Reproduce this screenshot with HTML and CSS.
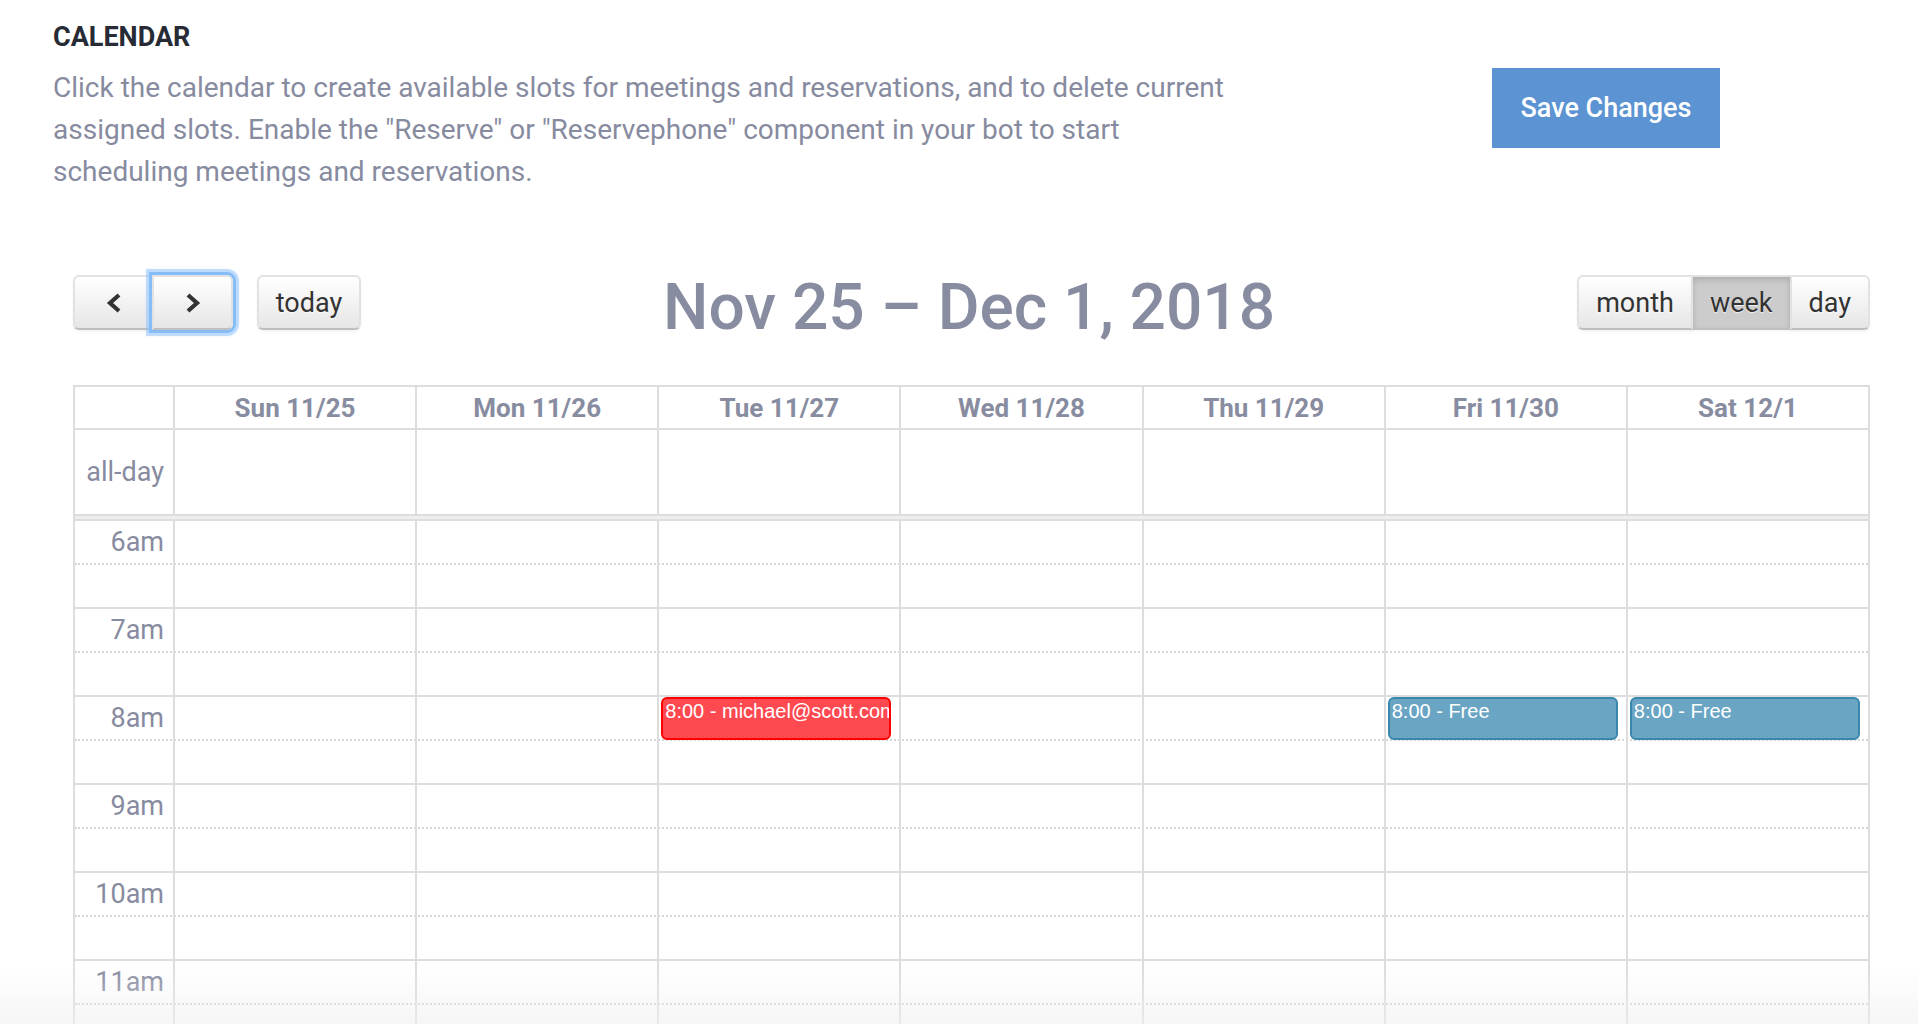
FILE: index.html
```html
<!DOCTYPE html>
<html lang="en">
<head>
    <meta charset="UTF-8">
    <meta name="viewport" content="width=device-width, initial-scale=1.0">
    <title>Calendar</title>
    <link rel="stylesheet" href="styles.css">
</head>
<body>

<div class="page">
    <div class="header">
        <div class="intro">
            <h2 class="section-title">CALENDAR</h2>
            <p class="section-desc">Click the calendar to create available slots for meetings and reservations, and to delete current assigned slots. Enable the "Reserve" or "Reservephone" component in your bot to start scheduling meetings and reservations.</p>
        </div>
        <button class="btn-save">Save Changes</button>
    </div>

    <div class="calendar">
        <!-- Toolbar -->
        <div class="cal-toolbar">
            <div class="toolbar-left">
                <div class="btn-group">
                    <button class="cal-btn btn-icon" aria-label="prev">
                        <svg width="18" height="22" viewBox="0 0 18 22"><polyline points="14,3 5,11 14,19" fill="none" stroke="#333" stroke-width="4.2"/></svg>
                    </button>
                    <button class="cal-btn btn-icon is-focused" aria-label="next">
                        <svg width="18" height="22" viewBox="0 0 18 22"><polyline points="4,3 13,11 4,19" fill="none" stroke="#333" stroke-width="4.2"/></svg>
                    </button>
                </div>
                <button class="cal-btn btn-today">today</button>
            </div>
            <h2 class="cal-title">Nov 25 – Dec 1, 2018</h2>
            <div class="btn-group">
                <button class="cal-btn">month</button>
                <button class="cal-btn is-active">week</button>
                <button class="cal-btn">day</button>
            </div>
        </div>

        <!-- Week grid -->
        <div class="cal-grid">
            <div class="cal-row cal-head">
                <div class="cal-axis"></div>
                <div class="cal-cell">Sun 11/25</div>
                <div class="cal-cell">Mon 11/26</div>
                <div class="cal-cell">Tue 11/27</div>
                <div class="cal-cell">Wed 11/28</div>
                <div class="cal-cell">Thu 11/29</div>
                <div class="cal-cell">Fri 11/30</div>
                <div class="cal-cell">Sat 12/1</div>
            </div>
            <div class="cal-row cal-allday">
                <div class="cal-axis">all-day</div>
                <div class="cal-cell"></div>
                <div class="cal-cell"></div>
                <div class="cal-cell"></div>
                <div class="cal-cell"></div>
                <div class="cal-cell"></div>
                <div class="cal-cell"></div>
                <div class="cal-cell"></div>
            </div>
            <div class="cal-divider"></div>

            <div class="cal-body">
                <div class="slat"><div class="slat-axis">6am</div></div>
                <div class="slat half"></div>
                <div class="slat"><div class="slat-axis">7am</div></div>
                <div class="slat half"></div>
                <div class="slat"><div class="slat-axis">8am</div></div>
                <div class="slat half"></div>
                <div class="slat"><div class="slat-axis">9am</div></div>
                <div class="slat half"></div>
                <div class="slat"><div class="slat-axis">10am</div></div>
                <div class="slat half"></div>
                <div class="slat"><div class="slat-axis">11am</div></div>
                <div class="slat half"></div>

                <!-- day columns with events laid over the slats -->
                <div class="cal-cols">
                    <div></div>
                    <div class="cal-col"></div>
                    <div class="cal-col"></div>
                    <div class="cal-col">
                        <div class="cal-event event-booked" style="top: 176px;">8:00 - michael@scott.com</div>
                    </div>
                    <div class="cal-col"></div>
                    <div class="cal-col"></div>
                    <div class="cal-col">
                        <div class="cal-event event-free" style="top: 176px;">8:00 - Free</div>
                    </div>
                    <div class="cal-col">
                        <div class="cal-event event-free" style="top: 176px;">8:00 - Free</div>
                    </div>
                </div>
            </div>
        </div>
    </div>
</div>

<div class="bottom-fade"></div>

</body>
</html>
```

FILE: styles.css
```css
body {
    margin: 0;
    font-family: Roboto, "Noto Sans", Arial, sans-serif;
    background: #fff;
}
.page {
    padding: 21px 48px 0 53px;
}

/* Header */
.header {
    display: flex;
    align-items: flex-start;
}
.intro {
    width: 1180px;
}
.section-title {
    margin: 0;
    font-size: 27px;
    line-height: 32px;
    font-weight: 700;
    color: #272b35;
}
.section-desc {
    margin: 14px 0 0;
    font-size: 28px;
    line-height: 42px;
    color: #878b9f;
}
.btn-save {
    margin: 47px 150px 0 auto;
    width: 228px;
    height: 80px;
    border: none;
    background-color: #5b93d3;
    color: #fff;
    font-family: Roboto, Arial, sans-serif;
    font-size: 27px;
    font-weight: 500;
    cursor: pointer;
}

/* Calendar */
.calendar {
    margin: 82px 0 0 20px;
    width: 1797px;
}
.cal-toolbar {
    display: flex;
    justify-content: space-between;
    align-items: center;
    height: 55px;
    margin-bottom: 55px;
}
.toolbar-left {
    display: flex;
    gap: 24px;
}
.btn-group {
    display: flex;
}
.cal-btn {
    position: relative;
    height: 55px;
    padding: 0 17px;
    font-family: Roboto, Arial, sans-serif;
    font-size: 27px;
    color: #333;
    background: linear-gradient(#fff, #e6e6e6);
    border: 2px solid;
    border-color: #e2e2e2 #e2e2e2 #bfbfbf;
    border-radius: 6px;
    box-shadow: inset 0 2px 0 rgba(255, 255, 255, .2), 0 2px 3px rgba(0, 0, 0, .05);
    text-shadow: 0 1px 1px rgba(255, 255, 255, .75);
    cursor: pointer;
}
.btn-group .cal-btn {
    border-radius: 0;
}
.btn-group .cal-btn:first-child {
    border-radius: 6px 0 0 6px;
}
.btn-group .cal-btn:last-child {
    border-radius: 0 6px 6px 0;
}
.btn-group .cal-btn + .cal-btn {
    margin-left: -2px;
}
.btn-icon {
    width: 81px;
    padding: 0;
}
.cal-btn svg {
    display: block;
    margin: 0 auto;
}
.btn-today {
    width: 104px;
    padding: 0;
}
.is-focused {
    z-index: 1;
    box-shadow: 0 0 0 3px #86bdf9, 0 0 1px 6px rgba(134, 189, 249, .55);
}
.cal-btn.is-active {
    background: #ccc;
    box-shadow: inset 0 3px 6px rgba(0, 0, 0, .15), 0 1px 2px rgba(0, 0, 0, .05);
}
.cal-title {
    margin: 10px 0 0;
    font-size: 64px;
    line-height: 64px;
    font-weight: 500;
    color: #888ca0;
}

.cal-grid {
    border: 2px solid #ddd;
    border-bottom: none;
}
.cal-row,
.cal-cols {
    display: grid;
    grid-template-columns: 98px repeat(7, 1fr);
}
.cal-head {
    height: 41px;
    border-bottom: 2px solid #ddd;
}
.cal-head .cal-cell {
    display: flex;
    align-items: center;
    justify-content: center;
    font-size: 26px;
    font-weight: 700;
    color: #888ca0;
}
.cal-cell,
.cal-col {
    border-left: 2px solid #ddd;
}
.cal-allday {
    height: 84px;
}
.cal-axis {
    display: flex;
    align-items: center;
    justify-content: flex-end;
    padding-right: 9px;
    font-size: 27px;
    color: #878b9f;
}
.cal-divider {
    height: 3px;
    background: #eee;
    border-top: 2px solid #ddd;
    border-bottom: 2px solid #ddd;
}

.cal-body {
    position: relative;
}
.slat {
    box-sizing: border-box;
    height: 44px;
    border-bottom: 2px dotted #d6d6d6;
}
.slat.half {
    border-bottom: 2px solid #ddd;
}
.slat-axis {
    width: 98px;
    box-sizing: border-box;
    height: 42px;
    line-height: 42px;
    padding-right: 9px;
    text-align: right;
    font-size: 27px;
    color: #878b9f;
}
.cal-cols {
    position: absolute;
    top: 0;
    left: 0;
    right: 0;
    bottom: 0;
}
.cal-col {
    position: relative;
}
.cal-event {
    position: absolute;
    left: 2px;
    right: 8px;
    height: 43px;
    box-sizing: border-box;
    padding: 0 2px;
    border: 2px solid;
    border-radius: 6px;
    overflow: hidden;
    white-space: nowrap;
    font-family: "Liberation Sans", Arial, sans-serif;
    font-size: 20px;
    line-height: 24px;
    color: #fff;
}
.event-booked {
    background-color: #ff4950;
    border-color: #ff0000;
}
.event-free {
    background-color: #6aa5c4;
    border-color: #3a87ad;
}

.bottom-fade {
    position: fixed;
    left: 0;
    right: 0;
    bottom: 0;
    height: 60px;
    background: linear-gradient(rgba(246, 246, 248, 0), rgba(240, 240, 242, .6));
    pointer-events: none;
}
```
